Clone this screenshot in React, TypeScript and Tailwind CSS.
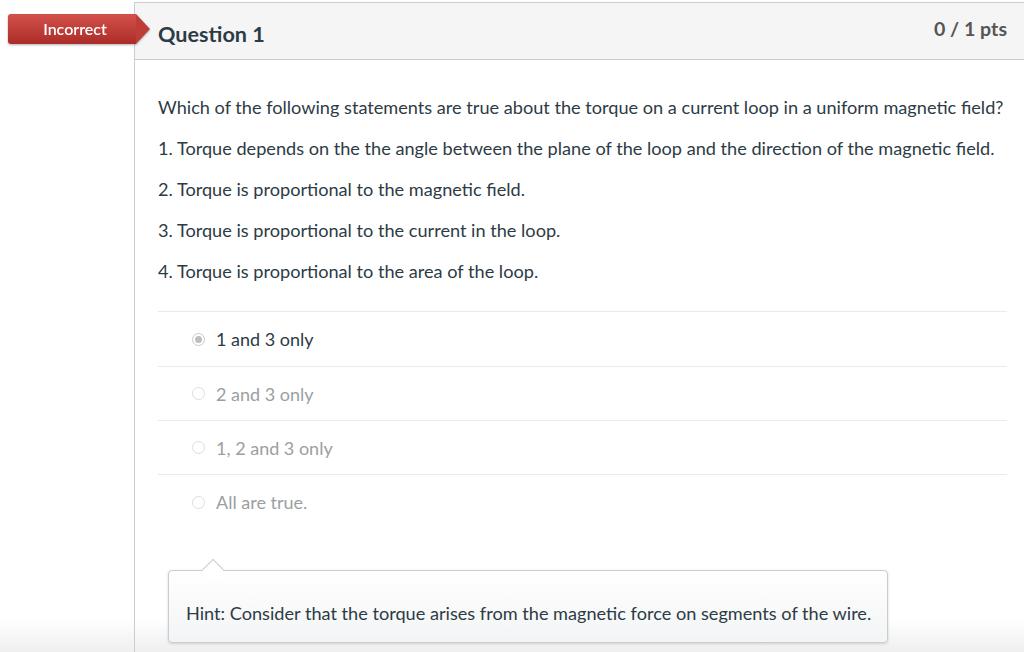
import React from "react";

const answers = [
  { label: "1 and 3 only", selected: true },
  { label: "2 and 3 only", selected: false },
  { label: "1, 2 and 3 only", selected: false },
  { label: "All are true.", selected: false },
];

const statements = [
  "Which of the following statements are true about the torque on a current loop in a uniform magnetic field?",
  "1. Torque depends on the the angle between the plane of the loop and the direction of the magnetic field.",
  "2. Torque is proportional to the magnetic field.",
  "3. Torque is proportional to the current in the loop.",
  "4. Torque is proportional to the area of the loop.",
];

function Radio({ selected }: { selected: boolean }) {
  if (selected) {
    return (
      <span className="w-[13px] h-[13px] rounded-full border border-[#c8c8c8] bg-white flex items-center justify-center">
        <span className="w-[7px] h-[7px] rounded-full bg-[#bdbdbd]" />
      </span>
    );
  }
  return <span className="w-[13px] h-[13px] rounded-full border border-[#dcdcdc] bg-white" />;
}

export default function App() {
  return (
    <div
      className="relative w-[1024px] h-[652px] overflow-hidden bg-[linear-gradient(to_bottom,#ffffff_0%,#ffffff_95%,#efefef_100%)] text-[#2d3b45]"
      style={{ fontFamily: "Lato, 'Open Sans', sans-serif" }}
    >
      {/* Incorrect badge */}
      <div className="absolute left-[8px] top-[14px] z-10 flex items-center drop-shadow-[0_1px_1px_rgba(0,0,0,0.3)]">
        <div className="w-[128px] h-[30px] rounded-l-[3px] bg-gradient-to-b from-[#d4504b] to-[#ab2c28] flex items-center justify-center text-white text-[16px] font-semibold pl-[6px]">
          Incorrect
        </div>
        <div className="w-0 h-0 border-y-[15px] border-y-transparent border-l-[14px] border-l-[#bf3d38]" />
      </div>

      <div className="flex h-full pt-[2px] pl-[134px]">
        <div className="w-[891px] border-l border-t border-[#c7cdd1] flex flex-col">
          {/* Header */}
          <div className="h-[57px] bg-[#f5f5f5] border-b border-[#c7cdd1] flex items-center justify-between pl-[23px] pr-[17px]">
            <h2 className="text-[21.6px] font-bold text-[#2d3b45] pt-[6px]">Question 1</h2>
            <span className="text-[19.6px] font-bold text-[#555555] -mt-[4px]">0 / 1 pts</span>
          </div>

          {/* Body */}
          <div className="pl-[23px] pr-[17px] pt-[36px]">
            <div className="flex flex-col gap-[18px] text-[18.15px] leading-[23px]">
              {statements.map((s) => (
                <p key={s} className="whitespace-nowrap">{s}</p>
              ))}
            </div>

            <div className="mt-[28px] border-t border-[#e8eaec]">
              {answers.map((a, i) => (
                <div
                  key={a.label}
                  className={`flex items-center gap-[11px] pl-[34px] ${i === 0 ? "h-[55px]" : "h-[54px]"} ${i < answers.length - 1 ? "border-b border-[#e8eaec]" : ""}`}
                >
                  <Radio selected={a.selected} />
                  <span className={`text-[18px] pt-[1px] ${a.selected ? "text-[#2d3b45]" : "text-[#9a9fa3]"}`}>
                    {a.label}
                  </span>
                </div>
              ))}
            </div>

            {/* Hint */}
            <div className="relative mt-[41px] ml-[10px] w-[720px]">
              <div className="absolute left-[37px] -top-[11px] w-[16px] h-[16px] rotate-45 bg-white border-l border-t border-[#c7cdd1] origin-center translate-y-[3px]" />
              <div className="h-[73px] rounded-[4px] border border-[#c7cdd1] bg-gradient-to-b from-white to-[#f3f4f5] shadow-[0_1px_3px_rgba(0,0,0,0.15)] flex items-end pl-[17px] pb-[15px]">
                <p className="relative text-[18.15px] text-[#2d3b45] whitespace-nowrap">
                  Hint: Consider that the torque arises from the magnetic force on segments of the wire.
                </p>
              </div>
            </div>
          </div>
        </div>
      </div>
    </div>
  );
}
